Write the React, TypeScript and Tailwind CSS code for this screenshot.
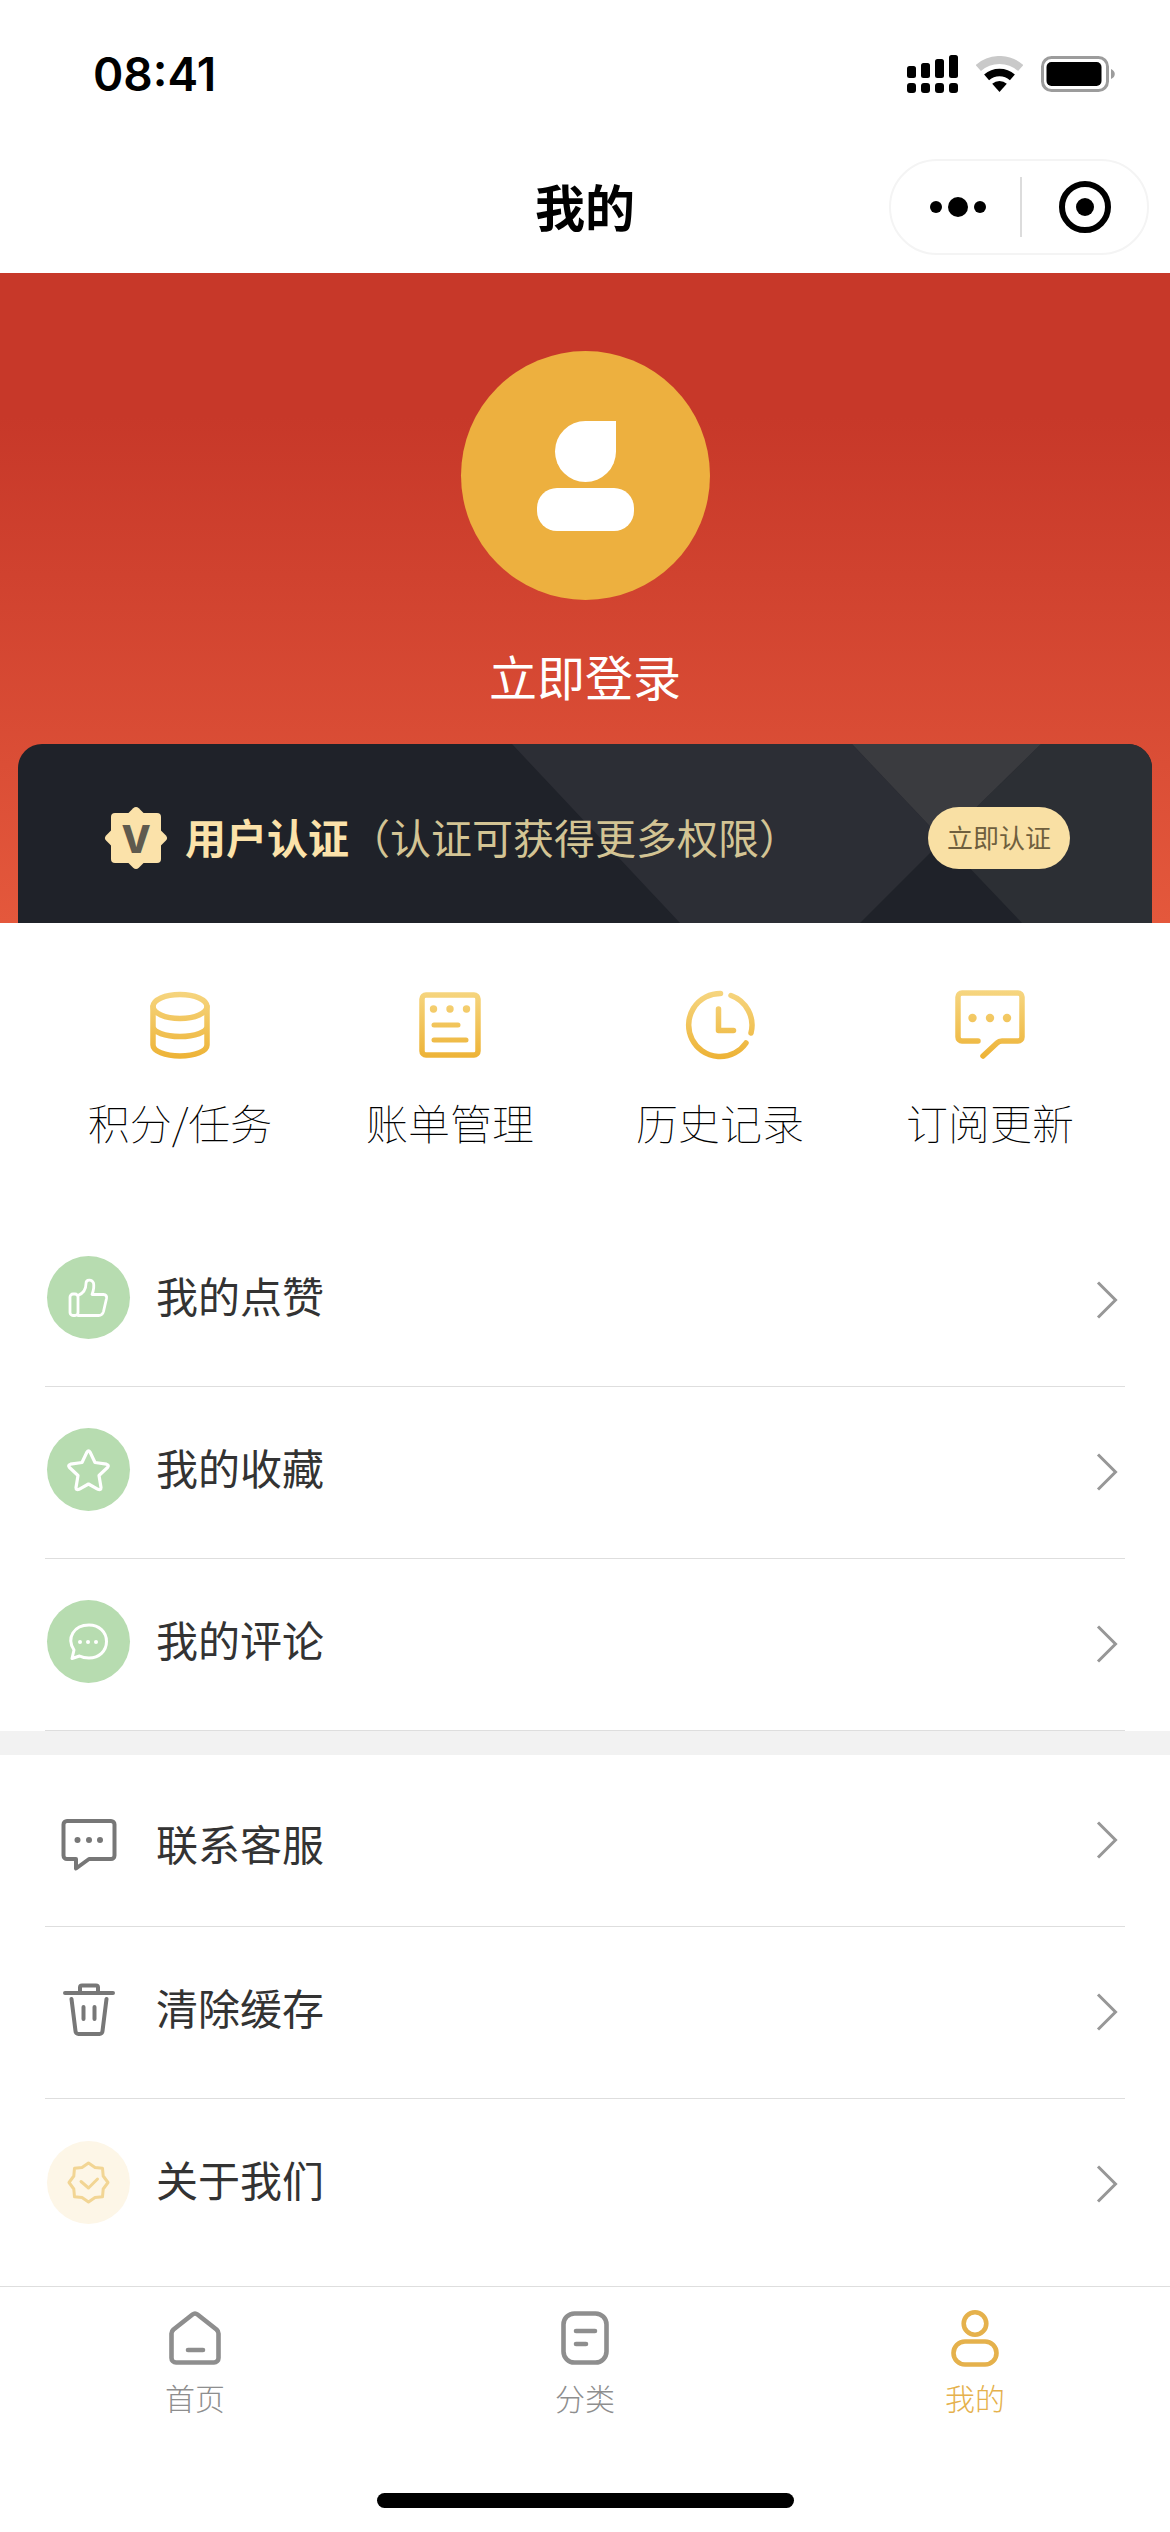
import React from "react";

const GoldIcon = ({ id, children }: { id: string; children: React.ReactNode }) => (
  <svg className="size-20" viewBox="0 0 80 80" fill="none" stroke={`url(#${id})`} strokeWidth="5.5" strokeLinecap="round" strokeLinejoin="round" aria-hidden="true">
    <defs>
      <linearGradient id={id} x1="0" y1="5" x2="0" y2="75" gradientUnits="userSpaceOnUse">
        <stop stopColor="#f6d681" />
        <stop offset="1" stopColor="#edb234" />
      </linearGradient>
    </defs>
    {children}
  </svg>
);

const shortcuts = [
  {
    label: "积分/任务",
    icon: (
      <GoldIcon id="gold-points">
        <ellipse cx="40" cy="21.5" rx="27" ry="12" />
        <path d="M13 21.5V60c0 6 12 11 27 11s27-5 27-11V21.5M13 41.500c0 5.500 12 10 27 10s27-4.500 27-10" />
      </GoldIcon>
    ),
  },
  {
    label: "账单管理",
    icon: (
      <GoldIcon id="gold-bills">
        <rect x="12" y="10" width="56" height="60" rx="4" />
        <path d="M24 40h24M24 55h32" strokeWidth="5" />
        <g fill="url(#gold-bills)" stroke="none">
          <circle cx="23.500" cy="24" r="3.700" />
          <circle cx="40" cy="24" r="3.700" />
          <circle cx="56.500" cy="24" r="3.700" />
        </g>
      </GoldIcon>
    ),
  },
  {
    label: "历史记录",
    icon: (
      <GoldIcon id="gold-history">
        <path d="M40.500 8.500A31.500 31.500 0 1 0 66 58M51 10.500A31.500 31.500 0 0 1 71 48" />
        <path d="M38.500 24v21.500h15" />
      </GoldIcon>
    ),
  },
  {
    label: "订阅更新",
    icon: (
      <GoldIcon id="gold-subscribe">
        <path d="M28 56H12a4 4 0 0 1-4-4V12a4 4 0 0 1 4-4h56a4 4 0 0 1 4 4v40a4 4 0 0 1-4 4H52q-3 0-5 2L33 71" />
        <g fill="url(#gold-subscribe)" stroke="none">
          <circle cx="22.500" cy="33" r="4.200" />
          <circle cx="40" cy="33" r="4.200" />
          <circle cx="57" cy="33" r="4.200" />
        </g>
      </GoldIcon>
    ),
  },
];

const RoundIcon = ({ className, children }: { className: string; children: React.ReactNode }) => (
  <svg className={`size-[83px] rounded-full ${className}`} viewBox="0 0 83 83" fill="none" stroke="currentColor" strokeLinecap="round" strokeLinejoin="round" aria-hidden="true">
    {children}
  </svg>
);

const activityRows = [
  {
    label: "我的点赞",
    icon: (
      <RoundIcon className="bg-[#b7dcb0] text-white">
        <g strokeWidth="2.8">
          <rect x="23" y="38" width="8" height="21.500" rx="3" />
          <path d="M31 39.500c5-2 8-6 8-12 0-4.500 6-4.500 7.500-.5 1 4 0 7.500-1.500 11.500h11.500c2.500 0 3.500 1.500 3 4l-3 13c-.8 3-2 4-5 4H31" />
        </g>
      </RoundIcon>
    ),
  },
  {
    label: "我的收藏",
    icon: (
      <RoundIcon className="bg-[#b7dcb0] text-white">
        <path strokeWidth="3.2" d="M40 24q1.500-2.500 3 0l5 10.500 11.500 1.700q3 .8 1 3.300L52 47.500l2 12q0 3-3 1.800L41.500 56l-9.500 5.300q-3 1.200-3-1.800l2-12-8.500-8q-2-2.500 1-3.300L35 34.500Z" />
      </RoundIcon>
    ),
  },
  {
    label: "我的评论",
    icon: (
      <RoundIcon className="bg-[#b7dcb0] text-white">
        <path strokeWidth="3" d="M27 50c-8-12 0-25 15-25 10 0 17.500 7 17.500 16.500S52 58 42 58c-4 0-7-.7-9.500-2L25 58.500Z" />
        <g fill="currentColor" stroke="none">
          <circle cx="33" cy="42" r="2" />
          <circle cx="41" cy="42" r="2" />
          <circle cx="49" cy="42" r="2" />
        </g>
      </RoundIcon>
    ),
  },
];

const settingRows = [
  {
    label: "联系客服",
    icon: (
      <RoundIcon className="text-[#777]">
        <path strokeWidth="4" d="M20 17h44a3.500 3.500 0 0 1 3.500 3.500v31A3.500 3.500 0 0 1 64 55H42L29 64.500V55h-9a3.500 3.500 0 0 1-3.500-3.500v-31A3.500 3.500 0 0 1 20 17Z" />
        <g fill="currentColor" stroke="none">
          <circle cx="30.500" cy="36" r="3" />
          <circle cx="42" cy="36" r="3" />
          <circle cx="53" cy="36" r="3" />
        </g>
      </RoundIcon>
    ),
  },
  {
    label: "清除缓存",
    icon: (
      <RoundIcon className="text-[#777]">
        <path strokeWidth="4" d="M18 25h48M33 24v-4.500a2 2 0 0 1 2-2h14a2 2 0 0 1 2 2V24M24.500 31l4 32a3 3 0 0 0 3 3h21a3 3 0 0 0 3-3l4-32M36.500 39v12M47.500 39v12" />
      </RoundIcon>
    ),
  },
  {
    label: "关于我们",
    icon: (
      <RoundIcon className="bg-[#fdf6e7] text-[#f2d594]">
        <g strokeWidth="3">
          <path d="m41.500 22 6.500 4.500 7.500.7.700 7.800 4.800 6.500-4.800 6.500-.7 7.800-7.500.7-6.500 4.500-6.500-4.500-7.500-.7-.7-7.800-4.800-6.500 4.800-6.500.7-7.800 7.500-.7Z" />
          <path d="m34 40.500 7.500 6.500 9-9" />
        </g>
      </RoundIcon>
    ),
  },
];

const tabs = [
  {
    label: "首页",
    active: false,
    icon: <path d="M27.500 6.500q2.500-2 5 0l19 15q2 1.800 2 4V50a4.500 4.500 0 0 1-4.500 4.500H11A4.500 4.500 0 0 1 6.500 50V25.500q0-2.200 2-4ZM23 42h15" />,
  },
  {
    label: "分类",
    active: false,
    icon: (
      <>
        <rect x="8.500" y="5.500" width="43" height="49" rx="11" />
        <path d="M21 23h19M21 36h10" />
      </>
    ),
  },
  {
    label: "我的",
    active: true,
    icon: (
      <>
        <circle cx="30" cy="15.500" r="11.300" />
        <rect x="8.500" y="33.500" width="43" height="23" rx="11.500" />
      </>
    ),
  },
];

const StatusBar = () => (
  <div className="flex h-[148px] items-center justify-between pl-[93px] pr-[55px]">
    <span className="font-['Inter',sans-serif] text-[46px] font-semibold leading-none">08:41</span>
    <div className="flex items-center gap-[18px]">
      <svg className="h-[38px] w-[51px]" viewBox="0 0 51 38" aria-hidden="true">
        <rect x="0" y="11" width="9" height="12" rx="2.500" />
        <rect x="14" y="8" width="9" height="15" rx="2.500" />
        <rect x="28" y="4" width="9" height="19" rx="2.500" />
        <rect x="42" y="0" width="9" height="23" rx="2.500" />
        <rect x="0" y="28" width="9" height="10" rx="3" />
        <rect x="14" y="28" width="9" height="10" rx="3" />
        <rect x="28" y="28" width="9" height="10" rx="3" />
        <rect x="42" y="28" width="9" height="10" rx="3" />
      </svg>
      <svg className="h-9 w-[47px]" viewBox="0 0 47 36" fill="none" aria-hidden="true">
        <path d="M2.300 12a32 32 0 0 1 42.400 0" stroke="#c9c9c9" strokeWidth="8" />
        <path d="M10.600 21.400a19.500 19.500 0 0 1 25.800 0" stroke="#000" strokeWidth="7.500" />
        <path d="M16.200 27.800a11 11 0 0 1 14.600 0L23.500 36Z" fill="#000" />
      </svg>
      <svg className="h-9 w-[74px]" viewBox="0 0 74 36" aria-hidden="true">
        <rect x="1.500" y="1.500" width="65" height="33" rx="9" fill="none" stroke="#9c9c9c" strokeWidth="3" />
        <rect x="5.500" y="6" width="55" height="24" rx="5" />
        <path d="M70 13c5 2 5 8 0 10Z" fill="#9c9c9c" />
      </svg>
    </div>
  </div>
);

const NavBar = () => (
  <div className="grid h-[118px] grid-cols-[1fr_auto_1fr] items-center px-[21px]">
    <h1 className="col-start-2 pb-1 text-[50px] font-bold leading-[64px]">我的</h1>
    <div className="flex h-24 w-[260px] items-center justify-self-end rounded-full border-2 border-[#f4f4f4]">
      <button type="button" aria-label="更多" className="flex h-full flex-1 items-center justify-center gap-[6px] pl-1">
        <span className="size-3 rounded-full bg-black" />
        <span className="size-5 rounded-full bg-black" />
        <span className="size-3 rounded-full bg-black" />
      </button>
      <span className="h-[60px] w-[2px] bg-[#dcdcdc]" />
      <button type="button" aria-label="关闭" className="flex h-full flex-1 items-center justify-center">
        <span className="flex size-[52px] items-center justify-center rounded-full border-[6px] border-black">
          <span className="size-[18px] rounded-full bg-black" />
        </span>
      </button>
    </div>
  </div>
);

const CertCard = () => (
  <div className="relative mx-[18px] mt-[37px] h-[179px] overflow-hidden rounded-t-3xl bg-[#1f2229]">
    <svg className="absolute inset-0 h-full w-full" viewBox="0 0 1134 179" preserveAspectRatio="none" aria-hidden="true">
      <path d="M494 0h340l91 96-83 83H662Z" fill="#2c2e35" />
      <path d="M1023 0h111v179h-130l-79-83Z" fill="#2c2f34" />
      <path d="M834 0h189l-98 96Z" fill="#3a3b3f" />
    </svg>
    <div className="relative flex h-full items-center pl-[85px] pr-[82px] pt-2">
      <svg className="size-[66px] shrink-0" viewBox="0 0 66 66" aria-hidden="true">
        <g fill="#fbe2aa">
          <rect x="8" y="8" width="50" height="50" rx="4" />
          <rect x="10" y="10" width="46" height="46" rx="4" transform="rotate(45 33 33)" />
        </g>
        <text x="33" y="48" textAnchor="middle" fill="#5f5a4e" className="font-['Inter',sans-serif] text-[38px] font-extrabold">V</text>
      </svg>
      <p className="ml-4 flex-1 whitespace-nowrap pb-1 text-[41px] leading-[60px] text-[#d3c494]">
        <strong className="font-bold text-[#fbe2aa]">用户认证</strong>（认证可获得更多权限）
      </p>
      <button type="button" className="h-[62px] w-[142px] rounded-full bg-[#f9e0a4] pb-[2px] text-[26px] leading-[60px] text-[#6f5f3e]">立即认证</button>
    </div>
  </div>
);

const Row = ({ icon, label, first = false, last = false }: { icon: React.ReactNode; label: string; first?: boolean; last?: boolean }) => (
  <li className={`h-[172px] ${last ? "" : "border-b border-[#dedede]"}`}>
    <a href="#" className="flex h-full items-center justify-between pl-[2px] pr-[6px]">
      <span className={`flex items-center gap-[26px] ${first ? "pt-2.5" : "pb-1.5"}`}>
        {icon}
        <span className="pb-1.5 text-[42px] leading-[60px] text-[#333]">{label}</span>
      </span>
      <svg className="mb-[2px] h-10 w-6" viewBox="0 0 24 40" fill="none" stroke="#979797" strokeWidth="3" aria-hidden="true">
        <path d="m3 2.500 17.500 17.500L3 37.500" />
      </svg>
    </a>
  </li>
);

const App = () => {
  return (
    <div className="flex min-h-screen flex-col bg-white font-['Noto_Sans_CJK_SC',sans-serif] text-black">
      <header className="pb-[7px]">
        <StatusBar />
        <NavBar />
      </header>

      <section className="bg-[linear-gradient(180deg,#c73829_0%,#c73829_22%,#e4583c_100%)] pt-[78px]">
        <a href="#" className="flex flex-col items-center text-white">
          <svg className="size-[249px] rounded-full bg-[#edb03f]" viewBox="0 0 249 249" fill="#fff" aria-hidden="true">
            <path d="M124.500 70H155v30.500A30.500 30.500 0 1 1 124.500 70Z" />
            <rect x="76" y="137" width="97" height="43" rx="20" />
          </svg>
          <span className="mt-[43px] text-5xl leading-[64px]">立即登录</span>
        </a>
        <CertCard />
      </section>

      <main>
        <nav className="grid grid-cols-4 px-[45px] pb-[65px] pt-[62px]">
          {shortcuts.map(({ label, icon }) => (
            <a key={label} href="#" className="flex flex-col items-center">
              {icon}
              <span className="mt-[29px] text-[42px] font-thin leading-[56px]">{label}</span>
            </a>
          ))}
        </nav>
        <ul className="px-[45px]">
          {activityRows.map((row) => (
            <Row key={row.label} {...row} />
          ))}
        </ul>
        <div className="h-6 bg-[#f2f2f2]" />
        <ul className="px-[45px]">
          {settingRows.map((row, i) => (
            <Row key={row.label} {...row} first={i === 0} last={i === settingRows.length - 1} />
          ))}
        </ul>
      </main>

      <footer className="mt-auto border-t border-[#dedede] pb-6 pt-[21px]">
        <nav className="grid grid-cols-3">
          {tabs.map(({ label, active, icon }) => (
            <a key={label} href="#" className={`flex flex-col items-center ${active ? "text-[#e5b14c]" : "text-[#8e8e8e]"}`}>
              <svg className="size-[60px]" viewBox="0 0 60 60" fill="none" stroke="currentColor" strokeWidth="4.6" strokeLinecap="round" strokeLinejoin="round" aria-hidden="true">
                {icon}
              </svg>
              <span className="mt-[9px] text-[30px] font-light leading-10">{label}</span>
            </a>
          ))}
        </nav>
        <div className="mx-auto mt-[76px] h-[15px] w-[417px] rounded-full bg-black" />
      </footer>
    </div>
  );
};

export default App;
